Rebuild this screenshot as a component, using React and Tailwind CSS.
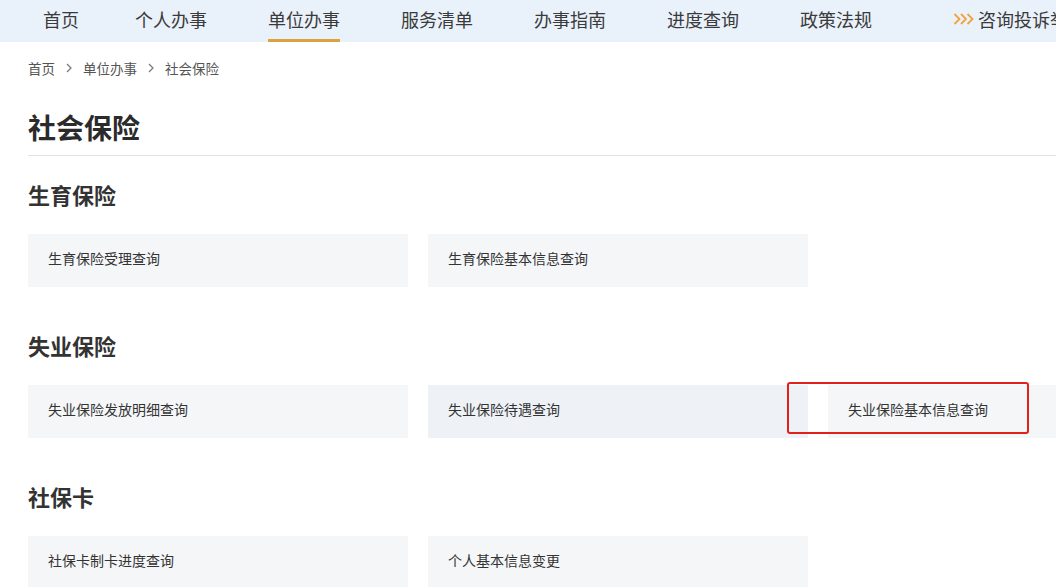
import React from "react";

const font = { fontFamily: '"Noto Sans CJK SC", "Noto Sans", sans-serif' };

function Chevron() {
  return (
    <svg width="6" height="10" viewBox="0 0 6 10" className="mx-[11px]">
      <polyline points="1,1 5,5 1,9" fill="none" stroke="#777" strokeWidth="1.2" />
    </svg>
  );
}

function Arrows() {
  return (
    <svg width="22" height="14" viewBox="0 0 22 14" className="mr-[3px]">
      <polyline points="1.5,2 6.5,7 1.5,12" fill="none" stroke="#f0a23c" strokeWidth="1.8" />
      <polyline points="8,2 13,7 8,12" fill="none" stroke="#f0a23c" strokeWidth="1.8" />
      <polyline points="14.5,2 19.5,7 14.5,12" fill="none" stroke="#f0a23c" strokeWidth="1.8" />
    </svg>
  );
}

function Card({ text, hover, marked }) {
  return (
    <div
      className={
        "relative w-[380px] h-[53px] shrink-0 flex items-center pl-[20px] pb-[4px] text-[14px] text-[#333] " +
        (hover ? "bg-[#eef2f7]" : "bg-[#f5f6f8]")
      }
    >
      {text}
      {marked && (
        <div className="absolute left-[-41px] top-[-3px] w-[242px] h-[52px] border-2 border-[#e3201b] rounded-[3px]" />
      )}
    </div>
  );
}

function Section({ title, cards }) {
  return (
    <div className="mb-[45px]">
      <h2 className="text-[22px] leading-[26px] h-[30px] font-bold text-[#333] mb-[23px]">{title}</h2>
      <div className="flex gap-[20px]">
        {cards.map((c) => (
          <Card key={c.text} {...c} />
        ))}
      </div>
    </div>
  );
}

export default function App() {
  const nav = [
    { t: "首页", ml: "ml-[43px]" },
    { t: "个人办事", ml: "ml-[56px]" },
    { t: "单位办事", ml: "ml-[61px]", active: true },
    { t: "服务清单", ml: "ml-[61px]" },
    { t: "办事指南", ml: "ml-[61px]" },
    { t: "进度查询", ml: "ml-[61px]" },
    { t: "政策法规", ml: "ml-[61px]" },
  ];
  return (
    <div className="w-[1056px] h-[587px] overflow-hidden bg-white" style={font}>
      <div className="h-[42px] bg-[#e9f1fb] flex items-stretch whitespace-nowrap">
        {nav.map((n) => (
          <div
            key={n.t}
            className={
              n.ml +
              " relative flex items-center pb-[4px] text-[18px] text-[#3a3a3a] shrink-0"
            }
          >
            {n.t}
            {n.active && (
              <div className="absolute left-0 right-0 bottom-0 h-[3px] bg-[#daa340]" />
            )}
          </div>
        ))}
        <div className="ml-[81px] flex items-center pb-[4px] text-[18px] text-[#3a3a3a] shrink-0">
          <Arrows />
          <span>咨询投诉举报</span>
        </div>
      </div>

      <div className="w-[1200px] pl-[28px]">
        <div className="mt-[16px] h-[20px] flex items-center text-[13.5px] text-[#555]">
          <span>首页</span>
          <Chevron />
          <span>单位办事</span>
          <Chevron />
          <span>社会保险</span>
        </div>
        <div className="mt-[32px] pb-[9px] border-b border-[#e3e3e3]">
          <h1 className="text-[28px] leading-[34px] h-[36px] font-bold text-[#2b2b2b]">社会保险</h1>
        </div>
        <div className="mt-[25px]">
          <Section
            title="生育保险"
            cards={[{ text: "生育保险受理查询" }, { text: "生育保险基本信息查询" }]}
          />
          <Section
            title="失业保险"
            cards={[
              { text: "失业保险发放明细查询" },
              { text: "失业保险待遇查询", hover: true },
              { text: "失业保险基本信息查询", marked: true },
            ]}
          />
          <Section
            title="社保卡"
            cards={[{ text: "社保卡制卡进度查询" }, { text: "个人基本信息变更" }]}
          />
        </div>
      </div>
    </div>
  );
}
